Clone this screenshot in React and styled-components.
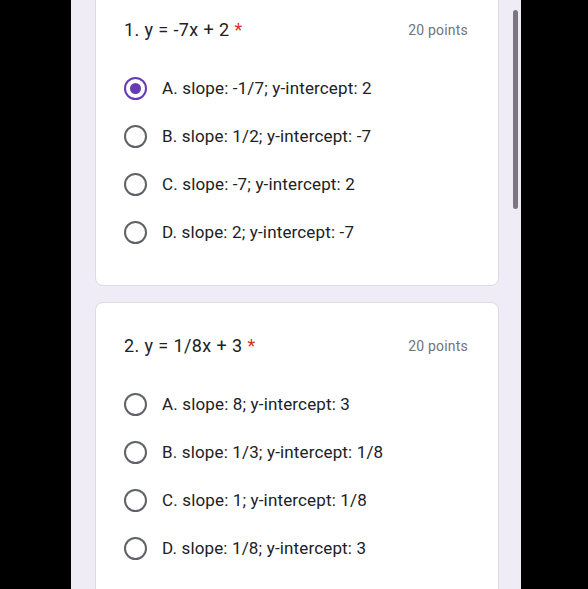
import React from "react";
import styled, { createGlobalStyle } from "styled-components";

const Global = createGlobalStyle`
  html, body { margin: 0; padding: 0; background: #000; height: 589px; overflow: hidden; }
  body { font-family: Roboto, "Noto Sans", Arial, sans-serif; }
`;

const Page = styled.div`
  display: flex;
  justify-content: flex-start;
  height: 589px;
  overflow: hidden;
`;

const Column = styled.div`
  position: relative;
  margin-left: 71px;
  width: 450px;
  height: 589px;
  background: #efebf7;
  box-sizing: border-box;
  padding: 0 22px 0 24px;
  overflow: hidden;
`;

const Stack = styled.div`
  display: flex;
  flex-direction: column;
  gap: 16px;
  margin-top: -14px;
`;

const Card = styled.div`
  background: #fff;
  border: 1px solid #dadce0;
  border-radius: 8px;
  padding: 23px 30px 29px 28px;
`;

const TitleRow = styled.div`
  display: flex;
  align-items: center;
  justify-content: space-between;
  height: 38px;
`;

const Title = styled.div`
  font-size: 18px;
  color: #202124;
  letter-spacing: 0.4px;
`;

const Star = styled.span`
  color: #d93025;
  margin-left: 5px;
`;

const Points = styled.div`
  font-size: 14px;
  color: #70757a;
  letter-spacing: 0.2px;
  margin-top: 2px;
`;

const Options = styled.div`
  display: flex;
  flex-direction: column;
  margin-top: 16px;
`;

const Option = styled.div`
  display: flex;
  align-items: center;
  height: 48px;
`;

const Radio = styled.span`
  box-sizing: border-box;
  width: 23px;
  height: 23px;
  border-radius: 50%;
  border: 2.5px solid ${(p) => (p.$checked ? "#673ab7" : "#5f6368")};
  display: flex;
  align-items: center;
  justify-content: center;
  flex: none;
  &::after {
    content: "";
    width: 11px;
    height: 11px;
    border-radius: 50%;
    background: #673ab7;
    display: ${(p) => (p.$checked ? "block" : "none")};
  }
`;

const Label = styled.span`
  margin-left: 15px;
  font-size: 17px;
  color: #202124;
  letter-spacing: 0.15px;
`;

const Scrollbar = styled.div`
  position: absolute;
  left: 442px;
  top: 10px;
  width: 5px;
  height: 199px;
  border-radius: 3px;
  background: #7b7682;
`;

const questions = [
  {
    title: "1. y = -7x + 2",
    options: [
      "A. slope: -1/7; y-intercept: 2",
      "B. slope: 1/2; y-intercept: -7",
      "C. slope: -7; y-intercept: 2",
      "D. slope: 2; y-intercept: -7",
    ],
    checked: 0,
  },
  {
    title: "2. y = 1/8x + 3",
    options: [
      "A. slope: 8; y-intercept: 3",
      "B. slope: 1/3; y-intercept: 1/8",
      "C. slope: 1; y-intercept: 1/8",
      "D. slope: 1/8; y-intercept: 3",
    ],
    checked: -1,
  },
];

export default function App() {
  return (
    <Page>
      <Global />
      <Column>
        <Stack>
          {questions.map((q) => (
            <Card key={q.title}>
              <TitleRow>
                <Title>
                  {q.title}
                  <Star>*</Star>
                </Title>
                <Points>20 points</Points>
              </TitleRow>
              <Options>
                {q.options.map((o, i) => (
                  <Option key={o}>
                    <Radio $checked={i === q.checked} />
                    <Label>{o}</Label>
                  </Option>
                ))}
              </Options>
            </Card>
          ))}
        </Stack>
        <Scrollbar />
      </Column>
    </Page>
  );
}
